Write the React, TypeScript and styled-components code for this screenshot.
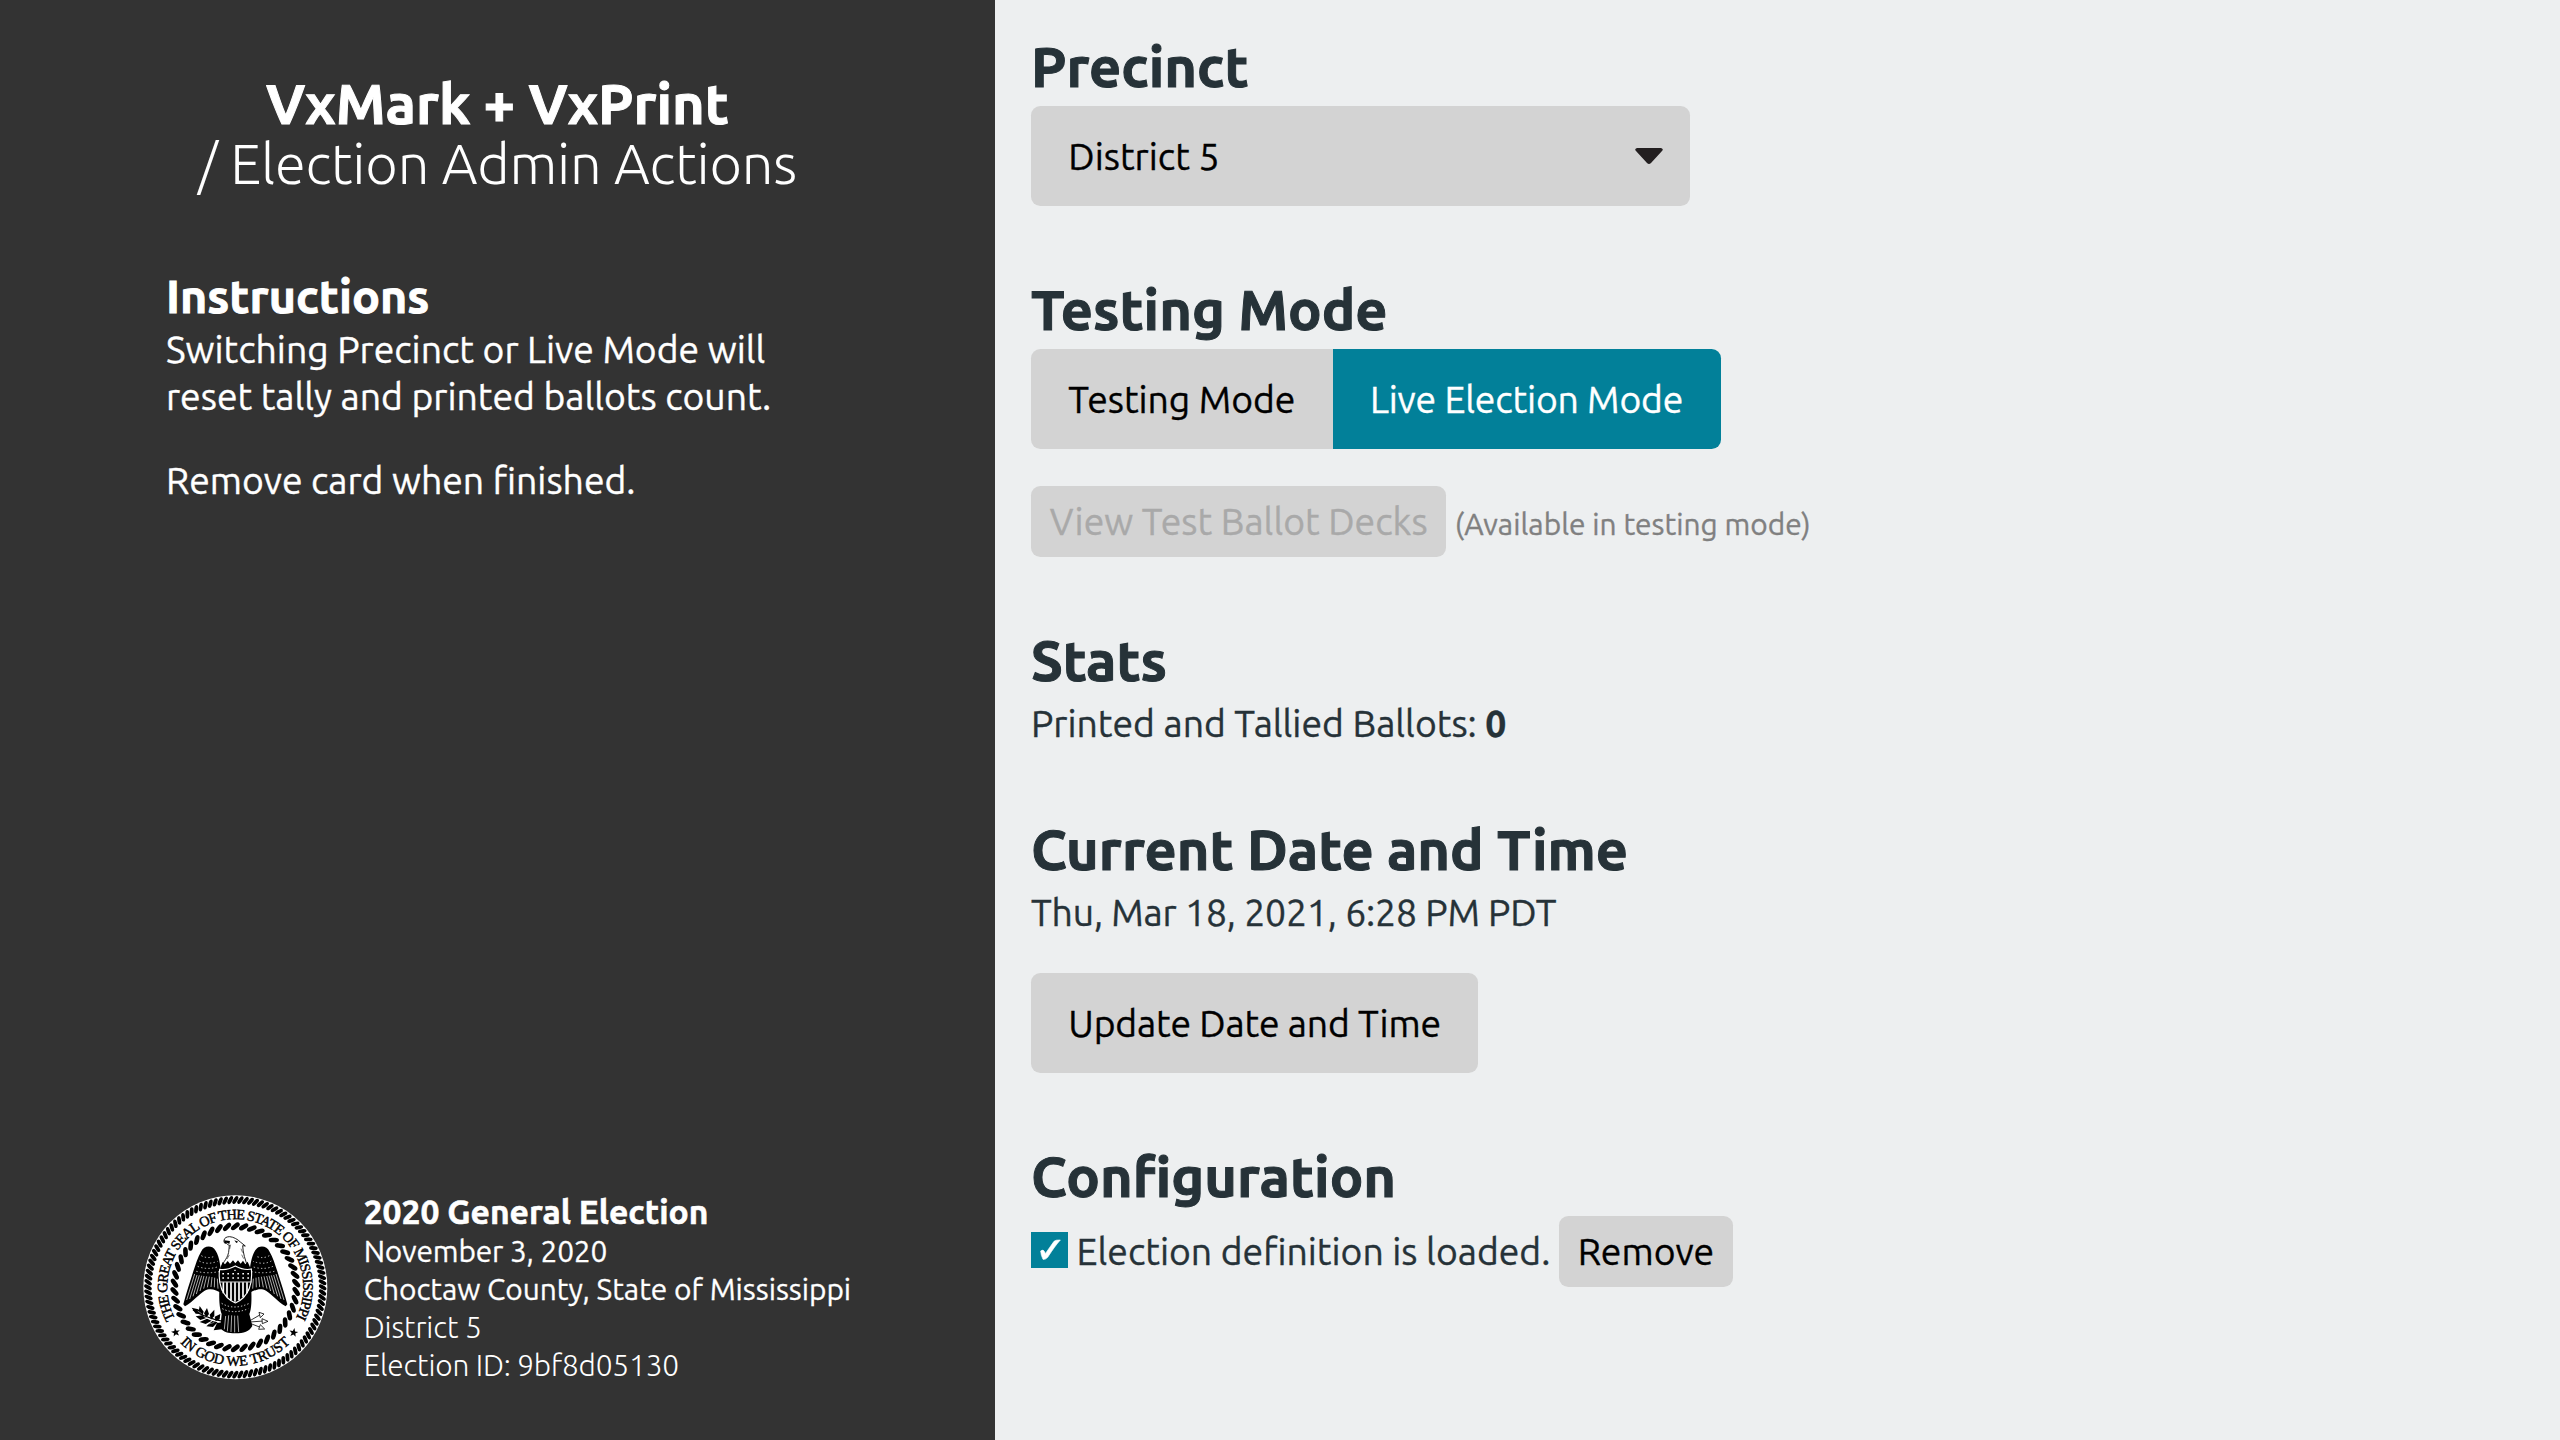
import React from 'react';
import styled, { createGlobalStyle } from 'styled-components';

const GlobalStyle = createGlobalStyle`
  * { box-sizing: border-box; }
  html, body { margin: 0; padding: 0; }
  body {
    background: #edeff0;
    color: #263238;
    font-family: Ubuntu, "Noto Sans", sans-serif;
    font-size: 37.333px;
    line-height: 46.667px;
    -webkit-text-stroke: 0.35px currentColor;
  }
`;

const Screen = styled.div`
  display: flex;
  height: 1440px;
  overflow: hidden;
`;

const Sidebar = styled.aside`
  display: flex;
  flex-direction: column;
  flex: 0 0 995px;
  padding: 74px 0 56px;
  background: #333333;
  color: #ffffff;
`;

const AppTitle = styled.h1`
  margin: 0;
  font-size: 56px;
  line-height: 60px;
  font-weight: 700;
  text-align: center;
  -webkit-text-stroke-width: 1px;
`;

const AppSubtitle = styled.span`
  display: block;
  font-weight: 300;
  letter-spacing: -0.2px;
  -webkit-text-stroke-width: 0;
`;

const Prose = styled.div`
  flex: 1;
  margin-top: 77px;
  padding: 0 165px 0 166px;
`;

const ProseHeading = styled.h2`
  margin: 0 0 5px;
  font-size: 46.667px;
  line-height: 50px;
  font-weight: 700;
  -webkit-text-stroke-width: 0.9px;
`;

const Paragraph = styled.p`
  margin: 0 0 37.333px;
  line-height: 47px;
`;

const ElectionInfo = styled.footer`
  display: flex;
  align-items: center;
  gap: 35.5px;
  padding-left: 141.5px;
`;

const ElectionText = styled.div`
  white-space: nowrap;
`;

const ElectionName = styled.div`
  padding-top: 1px;
  font-size: 33.6px;
  line-height: 41px;
  font-weight: 700;
  -webkit-text-stroke-width: 0.6px;
`;

const ElectionLine = styled.div<{ $light?: boolean; $track?: number }>`
  font-size: 29.867px;
  line-height: 38px;
  font-weight: ${(p) => (p.$light ? 300 : 400)};
  letter-spacing: ${(p) => p.$track ?? 0}px;
  -webkit-text-stroke-width: ${(p) => (p.$light ? '0' : '0.3px')};
`;

const Main = styled.main`
  display: flex;
  flex-direction: column;
  align-items: flex-start;
  gap: 73.333px;
  flex: 1;
  padding: 37px 36px;
`;

const Section = styled.section`
  white-space: nowrap;
`;

const Heading = styled.h1`
  margin: 0 0 9.333px;
  font-size: 56px;
  line-height: 60px;
  font-weight: 700;
  -webkit-text-stroke-width: 1px;
`;

const Line = styled.div<{ $track?: number }>`
  letter-spacing: ${(p) => p.$track ?? 0}px;
`;

const Row = styled.div<{ $spaced?: boolean }>`
  display: flex;
  align-items: baseline;
  gap: 8.6px;
  margin-top: ${(p) => (p.$spaced ? '37.333px' : '0')};
`;

const Button = styled.button<{ $small?: boolean; $primary?: boolean; $track?: number }>`
  height: ${(p) => (p.$small ? '71px' : '100px')};
  padding: 0 ${(p) => (p.$small ? '18.667px' : '37.333px')};
  padding-top: ${(p) => (p.$small ? '0' : '1px')};
  border: 0;
  border-radius: 9.333px;
  background: ${(p) => (p.$primary ? '#028099' : '#d3d3d3')};
  color: ${(p) => (p.$primary ? '#ffffff' : '#000000')};
  font: inherit;
  letter-spacing: ${(p) => p.$track ?? 0}px;
  &:disabled { color: #a9a9a9; }
`;

const Segmented = styled.div`
  display: flex;
  & > ${Button}:first-child { border-radius: 9.333px 0 0 9.333px; }
  & > ${Button}:last-child { border-radius: 0 9.333px 9.333px 0; }
`;

const Select = styled.div`
  display: flex;
  align-items: center;
  justify-content: space-between;
  width: 659px;
  height: 100px;
  padding: 1px 27.5px 0 37.333px;
  border-radius: 9.333px;
  background: #d3d3d3;
  color: #000000;
`;

const Caret = styled.svg`
  width: 28px;
  height: 16px;
  margin-top: -1px;
`;

const Hint = styled.small`
  color: #808080;
  font-size: 29.867px;
`;

const CheckBox = styled.span`
  display: flex;
  align-self: center;
  width: 37px;
  height: 36px;
  margin-top: -3px;
  background: #028099;
`;

const SealArt = styled.svg`
  flex: none;
  width: 186.667px;
  height: 186.667px;
  -webkit-text-stroke-width: 0;
`;

function Rope(props: { radius: number; count: number; length: number; width: number; tilt: number }) {
  const { radius, count, length, width, tilt } = props;
  return (
    <>
      {Array.from({ length: count }, (_, i) => (
        <rect
          key={i}
          x={-width / 2}
          y={-length / 2}
          width={width}
          height={length}
          rx={width / 2}
          ry={width * 0.8}
          transform={`translate(315 320) rotate(${(i * 360) / count}) translate(0 ${-radius}) rotate(${tilt})`}
        />
      ))}
    </>
  );
}

const STAR = 'M0-14 3.4-4.5 13.3-4.3 5.4 1.8 8.2 11.3 0 5.6-8.2 11.3-5.4 1.8-13.3-4.3-3.4-4.5Z';

function Wing() {
  return (
    <g>
      <path d="M122 122 C119 90 112 60 96 50 C84 44 68 49 63 62 C52 80 46 102 39 122 C29 154 17 190 9 221 L14 227 C38 213 56 190 73 180 C90 170 108 178 124 188 Z" />
      <g stroke="#fff" strokeWidth="2" fill="none">
        <path d="M43 130 L19 208 M50 133 L28 205 M57 134 L38 197 M64 135 L48 190 M71 136 L59 181 M79 137 L70 174 M87 138 L81 170 M95 139 L92 169 M103 141 L102 170 M111 144 L113 174" />
      </g>
      <g stroke="#fff" strokeWidth="2.4" fill="none" strokeDasharray="4 7">
        <path d="M63 75 Q82 86 105 76 M57 91 Q80 104 112 92 M52 107 Q80 119 114 108 M48 122 Q80 130 116 123" />
      </g>
    </g>
  );
}

function Seal() {
  return (
    <SealArt viewBox="35 40 560 560">
      <defs>
        <path id="seal-top" d="M134.3 414.3 A204 204 0 1 1 495.7 414.3" />
        <path id="seal-bottom" d="M148.8 486.2 A235 235 0 0 0 481.2 486.2" />
      </defs>
      <circle cx="315" cy="320" r="276" fill="#fff" />
      <Rope radius={262} count={108} length={26} width={11.5} tilt={32} />
      <Rope radius={183} count={46} length={31} width={14} tilt={52} />
      <g fontFamily='"Liberation Serif", serif' fontSize="43" stroke="#000" strokeWidth="1.3">
        <text textLength="834" lengthAdjust="spacing">
          <textPath href="#seal-top" textLength="834" lengthAdjust="spacing">
            THE GREAT SEAL OF THE STATE OF MISSISSIPPI
          </textPath>
        </text>
        <text textLength="368" lengthAdjust="spacing">
          <textPath href="#seal-bottom" textLength="368" lengthAdjust="spacing">
            IN GOD WE TRUST
          </textPath>
        </text>
      </g>
      <path d={STAR} transform="translate(136 455) rotate(-10)" />
      <path d={STAR} transform="translate(490 456) rotate(10)" />
      <g transform="translate(150 150)">
        <Wing />
        <g transform="translate(330 0) scale(-1 1)">
          <Wing />
        </g>
        {/* legs, body and tail */}
        <path d="M117 180 L213 180 C214 205 214 235 207 250 L216 286 C207 302 190 308 166 308 C142 308 130 304 120 292 L124 250 C117 232 116 205 117 180Z" />
        <g stroke="#fff" strokeWidth="2" fill="none">
          <path d="M136 256 L132 296 M145 254 L141 302 M154 254 L152 304 M163 255 L163 305 M172 255 L175 304" />
          <path d="M124 218 Q160 240 207 218 M126 234 Q160 252 204 234" strokeDasharray="4 6" strokeWidth="2.6" />
        </g>
        {/* olive branch */}
        <g>
          <path d="M38 238 Q75 262 128 272" fill="none" stroke="#000" strokeWidth="4" />
          <path d="M34 231 L54 236 L64 250 L46 249Z M58 226 L70 243 L66 256 L55 242Z M80 232 L86 250 L78 261 L71 248Z M102 237 L102 256 L92 267 L88 252Z M120 250 L118 266 L106 272 L103 258Z M46 257 L66 254 L78 262 L60 268Z M58 274 L80 264 L94 270 L76 280Z M78 287 L96 271 L112 275 L98 289Z M100 299 L110 277 L128 275 L124 296Z" />
          <path d="M52 241 L64 249 M70 258 L82 262 M86 280 L102 275" stroke="#fff" strokeWidth="1.4" />
        </g>
        {/* arrows */}
        <g fill="#fff" stroke="#000" strokeWidth="2.4">
          <path d="M209 270 L240 252 M209 274 L250 271 M209 278 L240 290" />
          <path d="M236 245 L251 250 L240 261Z M245 264 L263 272 L246 279Z M240 282 L253 295 L235 296Z" />
        </g>
        {/* head and neck */}
        <path d="M124 112 C126 92 145 85 146 55 L147 43 C143 43 140 41 139 38 C133 40 130 35 131 29 C132 21 140 18 148 18 C160 19 172 26 180 34 L195 46 L187 45 C188 66 194 88 204 112Z" fill="#fff" stroke="#000" strokeWidth="2.6" />
        <path d="M131 29 L149 31 L147 40 L140 36 L133 38Z M162 29 L174 33 L168 37Z" />
        <path d="M148 55 L151 42 M140 85 L147 73 M187 66 L182 54 M190 84 L184 72" stroke="#000" strokeWidth="1.6" />
        <path d="M119 114 L127 94 L134 101 L142 91 L149 99 L158 89 L165 98 L173 89 L181 99 L188 90 L195 101 L202 93 L211 114 L165 130Z" />
        {/* shield */}
        <path d="M118 116 C133 119 150 114 165 106 C180 114 197 119 213 115 C217 152 209 198 165 217 C121 198 113 152 118 116Z" stroke="#fff" strokeWidth="3.4" />
        <g stroke="#fff" fill="none">
          <path d="M118 154 H213" strokeWidth="2.5" />
          <path d="M129 155 V188 M140 155 V199 M152 155 V208 M164 155 V213 M176 155 V209 M188 155 V200 M200 155 V188" strokeWidth="5" />
          <path d="M126 129 H208 M126 142 H208" strokeWidth="4.5" strokeDasharray="5 10" />
          <path d="M157 119 H174" strokeWidth="4" strokeDasharray="4 8" strokeDashoffset="-5" />
        </g>
      </g>
    </SealArt>
  );
}

export default function App() {
  return (
    <>
      <GlobalStyle />
      <Screen>
        <Sidebar>
          <AppTitle>
            VxMark + VxPrint
            <AppSubtitle>/ Election Admin Actions</AppSubtitle>
          </AppTitle>
          <Prose>
            <ProseHeading>Instructions</ProseHeading>
            <Paragraph>
              Switching Precinct or Live Mode will
              <br />
              reset tally and printed ballots count.
            </Paragraph>
            <Paragraph>Remove card when finished.</Paragraph>
          </Prose>
          <ElectionInfo>
            <Seal />
            <ElectionText>
              <ElectionName>2020 General Election</ElectionName>
              <ElectionLine $track={-0.15}>November 3, 2020</ElectionLine>
              <ElectionLine $track={-0.03}>Choctaw County, State of Mississippi</ElectionLine>
              <ElectionLine $light $track={-0.1}>District 5</ElectionLine>
              <ElectionLine $light $track={-0.18}>Election ID: 9bf8d05130</ElectionLine>
            </ElectionText>
          </ElectionInfo>
        </Sidebar>
        <Main>
          <Section>
            <Heading>Precinct</Heading>
            <Select>
              District 5
              <Caret viewBox="0 0 28 16">
                <path d="M2 0H26Q29 1 27 3L16 15Q14 17 12 15L1 3Q-1 1 2 0Z" fill="#231f20" />
              </Caret>
            </Select>
          </Section>
          <Section>
            <Heading>Testing Mode</Heading>
            <Segmented>
              <Button $track={-0.05}>Testing Mode</Button>
              <Button $primary $track={-0.16}>Live Election Mode</Button>
            </Segmented>
            <Row $spaced>
              <Button $small disabled>View Test Ballot Decks</Button>
              <Hint>(Available in testing mode)</Hint>
            </Row>
          </Section>
          <Section>
            <Heading>Stats</Heading>
            <Line>
              Printed and Tallied Ballots: <strong>0</strong>
            </Line>
          </Section>
          <Section>
            <Heading>Current Date and Time</Heading>
            <Line $track={-0.16}>Thu, Mar 18, 2021, 6:28 PM PDT</Line>
            <Row $spaced>
              <Button $track={-0.16}>Update Date and Time</Button>
            </Row>
          </Section>
          <Section>
            <Heading>Configuration</Heading>
            <Row>
              <CheckBox>
                <svg width="37" height="36" viewBox="153 66 111 108">
                  <path d="M182 123Q190 116 194 126L196 131L222 94Q228 89 241 90Q226 106 203 142Q197 149 189 148Q183 137 182 123Z" fill="#fff" stroke="#fff" strokeWidth="2" />
                </svg>
              </CheckBox>
              <span>Election definition is loaded.</span>
              <Button $small>Remove</Button>
            </Row>
          </Section>
        </Main>
      </Screen>
    </>
  );
}
